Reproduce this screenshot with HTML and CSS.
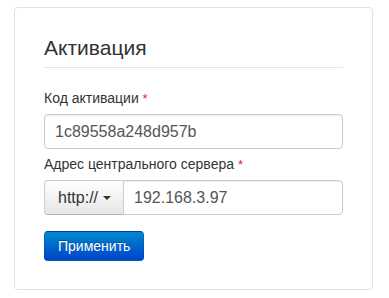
FILE: index.html
```html
<!DOCTYPE html>
<html lang="ru">
<head>
    <meta charset="UTF-8">
    <meta name="viewport" content="width=device-width, initial-scale=1.0">
    <title>Активация</title>
<link rel="stylesheet" href="styles.css">
</head>
<body>
    <div class="card">
        <h2 class="card-title">Активация</h2>
        <div class="field">
            <label class="field-label" for="code">Код активации <span class="req">*</span></label>
            <input class="text-input" id="code" type="text" value="1c89558a248d957b">
        </div>
        <div class="field">
            <label class="field-label" for="server">Адрес центрального сервера <span class="req">*</span></label>
            <div class="input-group">
                <button class="addon" type="button">http:// <span class="caret"></span></button>
                <input class="text-input group-input" id="server" type="text" value="192.168.3.97">
            </div>
        </div>
        <button class="btn-primary" type="button">Применить</button>
    </div>
</body>
</html>
```

FILE: styles.css
```css
body {
    margin: 0;
    padding: 7px 0 0 14px;
    font-family: "Liberation Sans", Arial, sans-serif;
    color: #333;
    background: #fff;
}

.card {
    width: 359px;
    box-sizing: border-box;
    border: 1px solid #e1e1e1;
    border-radius: 4px;
    padding: 29px 29px 28px 29px;
}

.card-title {
    margin: 0;
    font-size: 21px;
    font-weight: normal;
    line-height: 22px;
    padding-bottom: 8px;
    border-bottom: 1px solid #e5e5e5;
}

.field {
    display: flex;
    flex-direction: column;
}

.field-label {
    font-size: 14px;
    line-height: 20px;
    margin: 5px 0 5px;
}

.card-title + .field .field-label {
    margin-top: 20px;
}

.req {
    color: #e4262b;
    font-size: 13px;
}

.text-input {
    height: 35px;
    box-sizing: border-box;
    border: 1px solid #ccc;
    border-radius: 4px;
    padding: 0 10px;
    font-family: inherit;
    font-size: 16px;
    color: #555;
    box-shadow: inset 0 1px 1px rgba(0, 0, 0, .075);
    margin: 0;
    outline: none;
}

.input-group {
    display: flex;
}

.addon {
    display: flex;
    align-items: center;
    gap: 5px;
    height: 35px;
    box-sizing: border-box;
    margin: 0;
    padding: 0 12px 0 13px;
    font-family: inherit;
    font-size: 16px;
    color: #333;
    border: 1px solid #ccc;
    border-bottom-color: #b3b3b3;
    border-radius: 4px 0 0 4px;
    background: linear-gradient(to bottom, #fff, #e6e6e6);
}

.caret {
    width: 0;
    height: 0;
    border-top: 4px solid #333;
    border-left: 4px solid transparent;
    border-right: 4px solid transparent;
}

.group-input {
    flex: 1;
    min-width: 0;
    margin-left: -1px;
    border-radius: 0 4px 4px 0;
}

.btn-primary {
    align-self: flex-start;
    margin-top: 16px;
    height: 30px;
    padding: 0 13px;
    font-family: inherit;
    font-size: 14px;
    color: #fff;
    text-shadow: 0 -1px 0 rgba(0, 0, 0, .25);
    border: 1px solid #0044cc;
    border-color: rgba(0, 0, 0, .1) rgba(0, 0, 0, .1) rgba(0, 0, 0, .25);
    border-radius: 4px;
    background: linear-gradient(to bottom, #0088cc, #0044cc);
}
```
